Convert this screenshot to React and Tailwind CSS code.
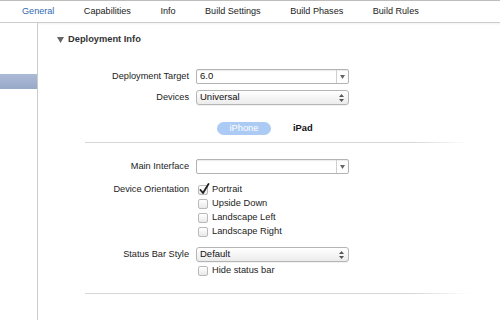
import React from 'react';

const tabs = ['General', 'Capabilities', 'Info', 'Build Settings', 'Build Phases', 'Build Rules'];

const ComboBox = ({ value }) => (
  <div className="w-[153px] h-[15px] flex items-stretch border border-[#b3b3b3] bg-white rounded-[2px] shadow-[inset_0_1px_1px_rgba(0,0,0,0.08)]">
    <div className="flex-1 pl-[3px] flex items-center text-[9.5px] text-[#111]">{value}</div>
    <div className="w-[12px] border-l border-[#cfcfcf] flex items-center justify-center">
      <svg width="5" height="4" viewBox="0 0 5 4">
        <path d="M0 0 L5 0 L2.5 4 Z" fill="#666" />
      </svg>
    </div>
  </div>
);

const PopUp = ({ value }) => (
  <div className="w-[153px] h-[15px] flex items-center justify-between border border-[#b5b5b5] rounded-[3px] bg-gradient-to-b from-white to-[#ececec] pl-[3px] pr-[4px] shadow-[0_1px_0_rgba(0,0,0,0.05)]">
    <span className="text-[9.5px] text-[#111]">{value}</span>
    <svg width="5" height="8" viewBox="0 0 5 8">
      <path d="M0 3 L2.5 0 L5 3 Z" fill="#555" />
      <path d="M0 5 L2.5 8 L5 5 Z" fill="#555" />
    </svg>
  </div>
);

const CheckBox = ({ label, checked }) => (
  <div className="h-[14px] flex items-center">
    <div className="relative w-[10px] h-[10px] border border-[#b9b9b9] rounded-[2px] bg-gradient-to-b from-white to-[#e9e9e9] ml-[2px]">
      {checked && (
        <svg className="absolute -top-[3px] left-[0px]" width="11" height="12" viewBox="0 0 11 12">
          <path d="M1.5 7 L4 10 L9.5 1" stroke="#222" strokeWidth="1.8" fill="none" strokeLinecap="round" strokeLinejoin="round" />
        </svg>
      )}
    </div>
    <span className="ml-[4px] text-[9.3px] text-[#222]">{label}</span>
  </div>
);

const Row = ({ label, children, className = '' }) => (
  <div className={`flex items-center ${className}`}>
    <div className="w-[158px] text-right text-[9.2px] text-[#222] pr-[7px] shrink-0">{label}</div>
    {children}
  </div>
);

const Separator = ({ className = '' }) => (
  <div className={`ml-[47px] w-[385px] h-px bg-gradient-to-r from-[#d6d6d6] via-[#d6d6d6] via-85% to-transparent ${className}`} />
);

export default function App() {
  return (
    <div className="w-[500px] h-[320px] bg-white overflow-hidden flex flex-col font-['Liberation_Sans',Arial,sans-serif]">
      {/* Tab bar */}
      <div className="h-[23px] shrink-0 border-t border-[#bdbdbd] border-b border-b-[#cdcdcd] bg-white flex items-center pl-[22px] gap-[29.5px] text-[9.1px] text-[#222] shadow-[0_1px_2px_rgba(0,0,0,0.06)]">
        {tabs.map((t, i) => (
          <span key={t} className={i === 0 ? 'text-[#3468b0]' : ''}>{t}</span>
        ))}
      </div>

      <div className="flex flex-1">
        {/* Sidebar */}
        <div className="w-[38px] shrink-0 border-r border-[#cbcbcb] bg-white">
          <div className="mt-[51px] h-[15px] w-[37px] bg-gradient-to-b from-[#abbad6] to-[#98a9c9]" />
        </div>

        {/* Main */}
        <div className="flex-1 flex flex-col">
          <div className="mt-[10px] h-[14px] flex items-center pl-[19px]">
            <svg width="7" height="6" viewBox="0 0 7 6">
              <path d="M0 0 L7 0 L3.5 6 Z" fill="#666" />
            </svg>
            <span className="ml-[4px] text-[9.3px] font-bold text-[#333]">Deployment Info</span>
          </div>

          <Row label="Deployment Target" className="mt-[22px] h-[15px]">
            <ComboBox value="6.0" />
          </Row>
          <Row label="Devices" className="mt-[6px] h-[15px]">
            <PopUp value="Universal" />
          </Row>

          <div className="mt-[17px] h-[13px] flex items-center pl-[179px]">
            <div className="w-[54px] h-[13px] rounded-full bg-[#abcbf4] flex items-center justify-center text-[9.3px] text-white">iPhone</div>
            <span className="ml-[22px] text-[9.3px] font-bold text-[#111]">iPad</span>
          </div>

          <Separator className="mt-[7px]" />

          <Row label="Main Interface" className="mt-[16px] h-[15px]">
            <ComboBox value="" />
          </Row>

          <Row label="Device Orientation" className="mt-[9px] h-[14px]">
            <CheckBox label="Portrait" checked />
          </Row>
          <div className="pl-[158px]">
            <CheckBox label="Upside Down" />
            <CheckBox label="Landscape Left" />
            <CheckBox label="Landscape Right" />
          </div>

          <Row label="Status Bar Style" className="mt-[8px] h-[15px]">
            <PopUp value="Default" />
          </Row>
          <div className="pl-[158px] mt-[2px]">
            <CheckBox label="Hide status bar" />
          </div>

          <Separator className="mt-[15px]" />
        </div>
      </div>
    </div>
  );
}
